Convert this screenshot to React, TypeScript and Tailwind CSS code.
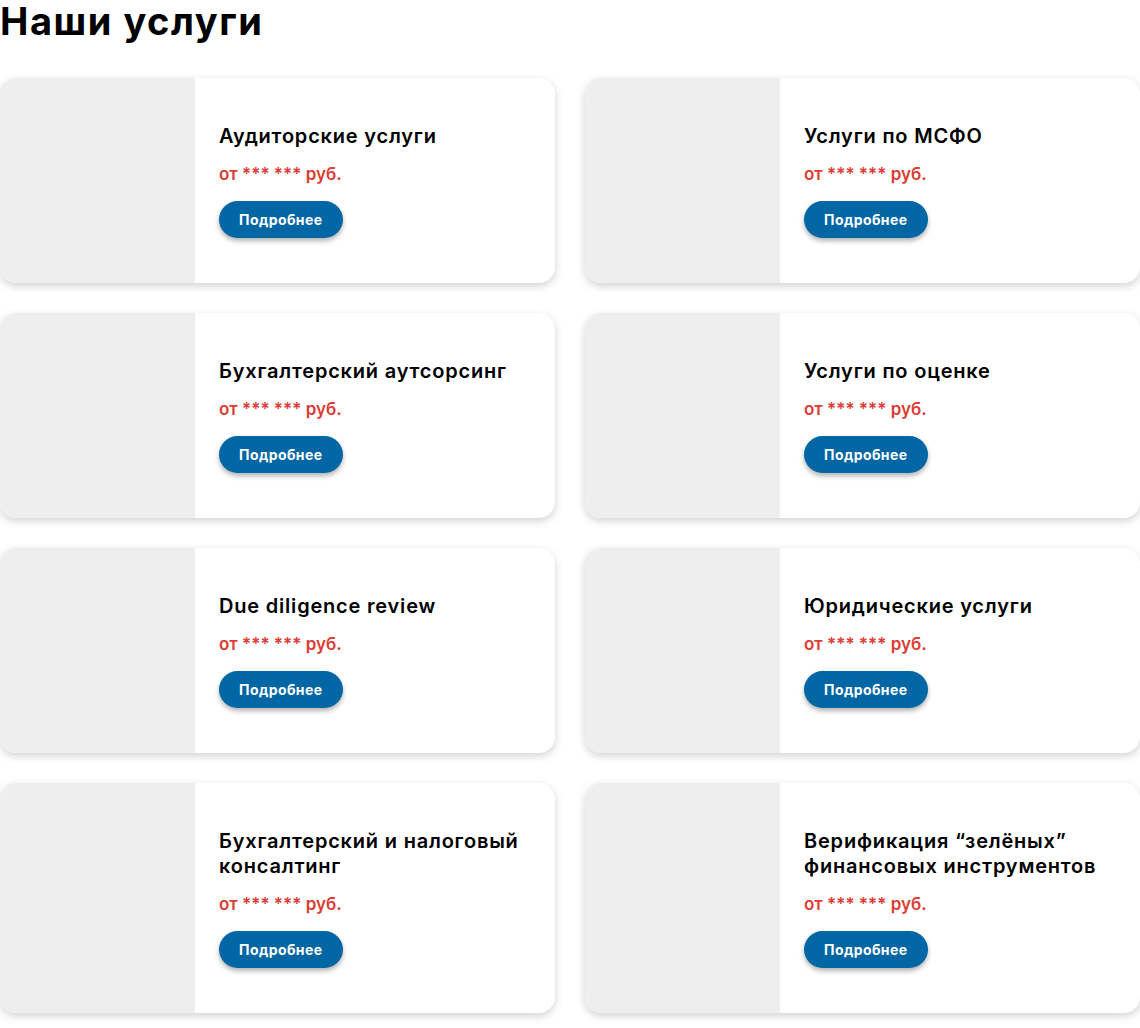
const services = [
  'Аудиторские услуги',
  'Услуги по МСФО',
  'Бухгалтерский аутсорсинг',
  'Услуги по оценке',
  'Due diligence review',
  'Юридические услуги',
  'Бухгалтерский и налоговый консалтинг',
  'Верификация “зелёных” финансовых инструментов',
]

function ServiceCard({ title }: { title: string }) {
  return (
    <article className="flex overflow-hidden rounded-[16px] bg-white shadow-[0_3px_8px_rgba(0,0,0,0.18)]">
      <div className="w-[195px] shrink-0 bg-[#eeeeee]" />
      <div className="flex flex-1 flex-col justify-center pb-[45px] pl-[24px] pr-[24px] pt-[46px]">
        <h3 className="text-[20px] font-semibold leading-[25px] tracking-[0.04em] text-black">{title}</h3>
        <p className="mt-[14px] text-[17px] font-semibold leading-[22px] text-[#dc3d35]">от *** *** руб.</p>
        <div className="mt-[16px]">
          <button
            className="h-[37px] rounded-full bg-[#0066a4] px-[20px] text-[14px] font-bold tracking-[0.03em] text-white shadow-[0_3px_5px_rgba(0,0,0,0.3)]"
            type="button"
          >
            Подробнее
          </button>
        </div>
      </div>
    </article>
  )
}

export default function App() {
  return (
    <div className="w-[1140px] bg-white pb-[15px] font-['Inter','Liberation_Sans',sans-serif]">
      <h2 className="text-[38px] font-bold leading-[42px] tracking-[0.04em] text-black">Наши услуги</h2>
      <div className="mt-[36px] grid grid-cols-2 gap-[30px]">
        {services.map((title) => (
          <ServiceCard key={title} title={title} />
        ))}
      </div>
    </div>
  )
}
